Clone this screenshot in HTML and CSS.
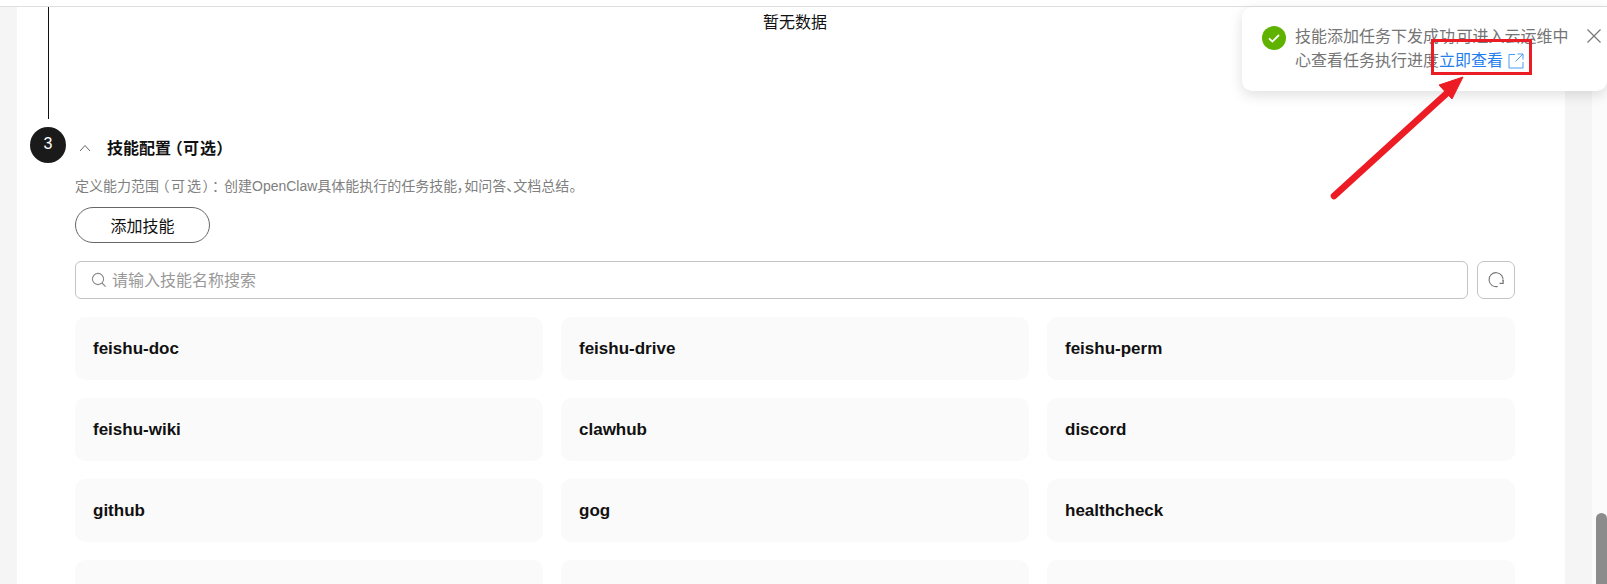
FILE: index.html
```html
<!DOCTYPE html>
<html lang="zh-CN">
<head>
<meta charset="utf-8">
<title>技能配置</title>
<link rel="stylesheet" href="styles.css">
</head>
<body>
<div class="page">
  <div class="topbar"></div>
  <div class="main">
    <div class="gutter-left"></div>
    <div class="panel">
      <div class="empty-row">
        <div class="rail"><div class="rail-line"></div></div>
        <div class="empty-text">暂无数据</div>
      </div>
      <div class="step-head">
        <div class="step-num">3</div>
        <svg class="chevron" width="12" height="8" viewBox="0 0 12 8"><path d="M1 7 6 1.5 11 7" fill="none" stroke="#666" stroke-width="1"/></svg>
        <div class="step-title">技能配置<span class="title-paren">（可选）</span></div>
      </div>
      <div class="step-body">
        <p class="desc">定义能力范围<span class="desc-paren">（可选）：</span>创建OpenClaw具体能执行的任务技能，如问答、文档总结。</p>
        <button class="add-btn">添加技能</button>
        <div class="search-row">
          <div class="search">
            <svg class="search-icon" width="16" height="16" viewBox="0 0 16 16"><circle cx="7" cy="7" r="5.6" fill="none" stroke="#888" stroke-width="1.1"/><path d="M11 11l3.6 3.6" stroke="#888" stroke-width="1.1" fill="none"/></svg>
            <span class="placeholder">请输入技能名称搜索</span>
          </div>
          <div class="refresh">
            <svg width="18" height="18" viewBox="0 0 18 18"><path d="M15.5 10.5A7 7 0 1 1 13.5 3.7" fill="none" stroke="#777" stroke-width="1.1" transform="rotate(62 9 9)"/><path d="M12.6 12.4h3.6v-3.4" fill="none" stroke="#777" stroke-width="1.1"/></svg>
          </div>
        </div>
        <div class="skills">
          <div class="skill">feishu-doc</div>
          <div class="skill">feishu-drive</div>
          <div class="skill">feishu-perm</div>
          <div class="skill">feishu-wiki</div>
          <div class="skill">clawhub</div>
          <div class="skill">discord</div>
          <div class="skill">github</div>
          <div class="skill">gog</div>
          <div class="skill">healthcheck</div>
          <div class="skill"></div>
          <div class="skill"></div>
          <div class="skill"></div>
        </div>
      </div>
    </div>
    <div class="gutter-right"></div>
    <div class="scrolltrack"><div class="scrollthumb"></div></div>
  </div>

  <div class="toast">
    <svg class="toast-check" width="24" height="24" viewBox="0 0 24 24"><circle cx="12" cy="12" r="12" fill="#5fb300"/><path d="M7 12.4l3.4 3.2L17 9" fill="none" stroke="#fff" stroke-width="1.8"/></svg>
    <div class="toast-text">技能添加任务下发成功<span class="toast-comma">,</span>可进入云运维中<br>心查看任务执行进度<a class="toast-link">立即查看<svg class="ext-icon" width="16" height="16" viewBox="0 0 16 16"><path d="M7 1.500H1v13.500h14V9M9.500 1h5.500v5.500M15 1 7.500 8.500" fill="none" stroke="#4a9cf5" stroke-width="1"/></svg></a></div>
    <svg class="toast-close" width="16" height="16" viewBox="0 0 16 16"><path d="M1.500 1.500l13 13M14.500 1.500l-13 13" stroke="#777" stroke-width="1.200"/></svg>
  </div>

  <div class="mark-box"></div>
  <svg class="mark-arrow" width="160" height="130" viewBox="0 0 160 130"><path d="M6 122 118 20" stroke="#ed1c24" stroke-width="6.500" stroke-linecap="round" fill="none"/><path d="M135 3 111 11 124 25Z" fill="#ed1c24" stroke="#ed1c24" stroke-width="1"/></svg>
</div>
</body>
</html>
```
FILE: styles.css
```css
* { box-sizing: border-box; }
html, body { margin: 0; padding: 0; background: #fff; }
body { font-family: "Liberation Sans", "Noto Sans CJK SC", sans-serif; color: #111; overflow: hidden; }
.page { position: relative; width: 1607px; height: 584px; overflow: hidden; display: flex; flex-direction: column; }
.topbar { height: 7px; flex: none; border-bottom: 1px solid #dfdfdf; background: #fff; }
.main { flex: 1; display: flex; min-height: 0; }
.gutter-left { width: 17px; flex: none; background: #f5f5f5; }
.gutter-right { width: 27px; flex: none; background: #f5f5f5; }
.panel { flex: 1; min-width: 0; background: #fff; padding: 0 50px 0 13px; overflow: hidden; }
.scrolltrack { width: 15px; flex: none; background: #fbfbfb; display: flex; flex-direction: column; justify-content: flex-end; align-items: flex-end; }
.scrollthumb { width: 11px; height: 71px; background: #8c8c8c; border-radius: 6px 6px 0 0; }
.empty-row { display: flex; height: 120px; }
.rail { width: 36px; flex: none; display: flex; justify-content: center; }
.rail-line { width: 1px; height: 112px; background: #111; }
.empty-text { flex: 1; margin-left: 9px; text-align: center; font-size: 16px; line-height: 32px; }
.step-head { display: flex; align-items: center; height: 36px; }
.step-num { width: 36px; height: 36px; flex: none; border-radius: 50%; background: #1a1a1a; color: #fff; font-size: 16px; line-height: 33px; text-align: center; }
.chevron { margin-left: 13px; margin-top: 6px; flex: none; }
.step-title { margin-left: 16px; margin-top: 3px; font-size: 16px; font-weight: 700; font-feature-settings: "palt"; white-space: nowrap; }
.title-paren { margin-left: 3px; letter-spacing: 1px; }
.step-body { margin-left: 45px; }
.desc { margin: 12px 0 0; font-size: 14px; line-height: 22px; color: #808080; white-space: nowrap; font-feature-settings: "palt"; }
.desc-paren { margin: 0 3px; letter-spacing: 2px; }
.add-btn { display: block; margin-top: 10px; width: 135px; height: 36px; padding: 0; background: #fff; border: 1px solid #666; border-radius: 18px; font: inherit; font-size: 16px; color: #111; }
.search-row { display: flex; gap: 9px; margin-top: 18px; }
.search { flex: 1; height: 38px; border: 1px solid #c4c4c4; border-radius: 6px; display: flex; align-items: center; padding-left: 15px; }
.search-icon { flex: none; }
.placeholder { margin: 0 0 2px 5px; font-size: 16px; color: #999; }
.refresh { width: 38px; height: 38px; flex: none; border: 1px solid #c4c4c4; border-radius: 7px; display: flex; align-items: center; justify-content: center; }
.skills { display: grid; grid-template-columns: repeat(3, 468px); gap: 18px; margin-top: 18px; }
.skill { height: 63px; border-radius: 10px; background: #fafafa; padding-left: 18px; font-size: 17px; font-weight: 700; line-height: 63px; color: #111; }
.toast { position: absolute; left: 1242px; top: 7px; width: 365px; height: 84px; background: #fff; border-radius: 10px 0 10px 10px; box-shadow: 0 4px 14px rgba(0,0,0,.13); }
.toast-check { position: absolute; left: 20px; top: 19px; }
.toast-text { position: absolute; left: 53px; top: 18px; width: 290px; font-size: 16px; line-height: 24px; color: #757575; white-space: nowrap; }
.toast-comma { letter-spacing: -3px; }
.toast-link { color: #1f7fee; }
.ext-icon { margin-left: 5px; vertical-align: -3px; }
.toast-close { position: absolute; left: 344px; top: 21px; }
.mark-box { position: absolute; left: 1431px; top: 39px; width: 101px; height: 36px; border: 3px solid #ea1c24; }
.mark-arrow { position: absolute; left: 1328px; top: 74px; }
```
